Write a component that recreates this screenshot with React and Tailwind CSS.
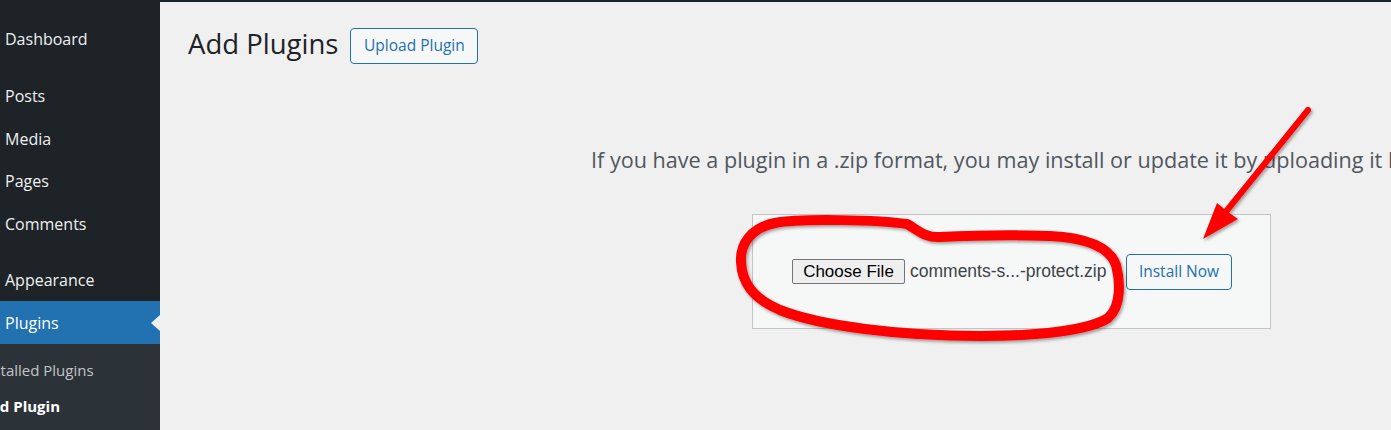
import React from 'react';

const menu = [
  { label: 'Dashboard', gap: 'h-[14.4px]' },
  { label: 'Posts' },
  { label: 'Media' },
  { label: 'Pages' },
  { label: 'Comments', gap: 'h-[13.6px]' },
  { label: 'Appearance' },
];

function Sidebar() {
  return (
    <div className="w-[160px] shrink-0 bg-[#1d2327] flex flex-col pt-[17.7px] text-[16px] text-[#f0f0f1]">
      {menu.map((item) => (
        <React.Fragment key={item.label}>
          <div className="h-[42.6px] flex items-center pl-[5px]">{item.label}</div>
          {item.gap && <div className={item.gap} />}
        </React.Fragment>
      ))}

      {/* current menu item */}
      <div className="relative h-[42.6px] flex items-center pl-[5px] bg-[#2271b1] text-white">
        Plugins
        <span className="absolute right-0 top-1/2 -translate-y-1/2 w-0 h-0 border-y-[8px] border-y-transparent border-r-[9px] border-r-[#f0f0f1]" />
      </div>

      {/* submenu */}
      <div className="flex-1 bg-[#2c3338] pt-[8px] text-[15px] overflow-hidden">
        <div className="h-[36px] flex items-center ml-[-20px] whitespace-nowrap text-[#c3c4c7]">Installed Plugins</div>
        <div className="h-[36px] flex items-center ml-[-20px] whitespace-nowrap font-bold text-white">Add Plugin</div>
      </div>
    </div>
  );
}

function Annotations() {
  return (
    <svg
      className="absolute inset-0 pointer-events-none"
      width="1391"
      height="430"
      viewBox="0 0 1391 430"
    >
      <defs>
        <filter id="shadow" x="-10%" y="-10%" width="120%" height="120%">
          <feDropShadow dx="1.5" dy="2" stdDeviation="1.5" floodColor="#000" floodOpacity="0.35" />
        </filter>
      </defs>
      <g filter="url(#shadow)">
        {/* loop around the file input */}
        <path
          d="M907 224 C880 220 800 218 775 223 C750 228 740 245 741 262 C742 282 752 298 780 310 C820 326 900 336 980 336 C1040 336 1090 330 1108 318 C1122 306 1120 280 1116 265 C1110 248 1090 238 1050 236 C1000 234 960 236 940 237 C925 238 918 230 907 224 Z"
          fill="none"
          stroke="#ff0000"
          strokeWidth="10"
          strokeLinejoin="round"
        />
        {/* arrow to Install Now */}
        <line x1="1308" y1="110" x2="1224" y2="214" stroke="#ff0000" strokeWidth="6" strokeLinecap="round" />
        <polygon points="1203,239 1217,203 1228,212 1238,219" fill="#ff0000" />
      </g>
    </svg>
  );
}

export default function App() {
  return (
    <div
      className="relative w-[1391px] h-[430px] flex overflow-hidden bg-[#f0f0f1]"
      style={{ fontFamily: '"Open Sans", "Noto Sans", sans-serif' }}
    >
      <Sidebar />

      <div className="flex-1 border-t-2 border-[#1d2327] overflow-hidden">
        {/* heading */}
        <div className="flex items-center pl-[28px] mt-[26px] h-[36px]">
          <h1 className="text-[27.5px] text-[#1d2327] leading-none mr-[12px] -mt-[4px]">Add Plugins</h1>
          <button className="h-[36px] w-[128px] rounded-[4px] border border-[#2271b1] bg-[#f6f7f7] text-[#2271b1] text-[15.5px]">
            Upload Plugin
          </button>
        </div>

        {/* upload area */}
        <p className="mt-[84px] ml-[431px] h-[24px] leading-[24px] whitespace-nowrap text-[21.6px] text-[#50575e]">
          If you have a plugin in a .zip format, you may install or update it by uploading it here.
        </p>

        <div className="ml-[592px] mt-[42px] w-[519px] h-[115px] border border-[#c3c4c7] bg-[#f6f7f7] flex items-center pl-[39px]">
          <div className="w-[334px] flex items-center" style={{ fontFamily: '"Liberation Sans", Arial, sans-serif' }}>
            <button className="h-[25px] w-[113px] rounded-[2px] border border-[#767676] bg-[#efefef] text-black text-[17px] leading-none">
              Choose File
            </button>
            <span className="ml-[5px] text-[17.5px] text-[#3c434a] whitespace-nowrap">comments-s...-protect.zip</span>
          </div>
          <button className="h-[36px] w-[106px] rounded-[4px] border border-[#2271b1] bg-[#f6f7f7] text-[#2271b1] text-[15.5px]">
            Install Now
          </button>
        </div>
      </div>

      <Annotations />
    </div>
  );
}
